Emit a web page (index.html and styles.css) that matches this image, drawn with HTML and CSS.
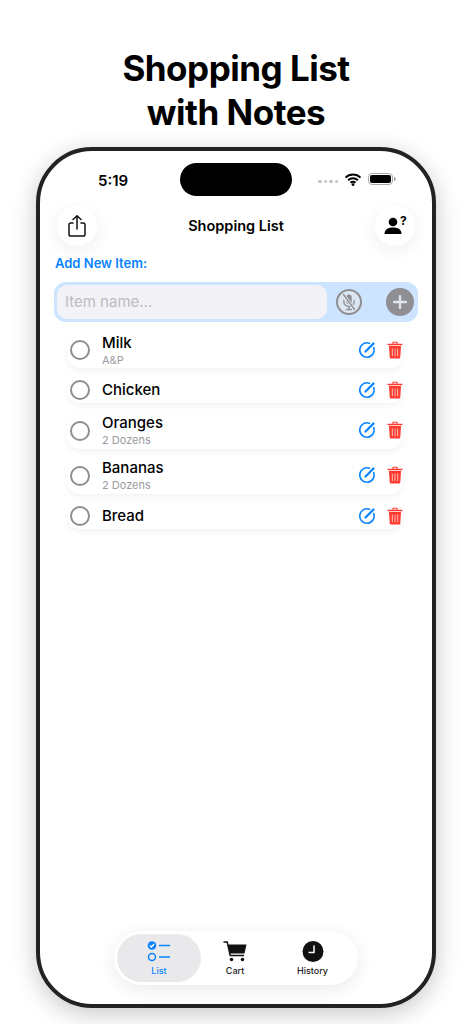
FILE: index.html
```html
<!DOCTYPE html>
<html lang="en">
<head>
  <meta charset="UTF-8">
  <meta name="viewport" content="width=device-width, initial-scale=1">
  <title>Shopping List with Notes</title>
  <link rel="stylesheet" href="styles.css">
</head>
<body>
  <h1 class="headline">Shopping List<br>with Notes</h1>

  <div class="phone">
    <div class="status-bar">
      <span class="time">5:19</span>
      <div class="island"></div>
      <div class="status-icons">
        <div class="signal"><i></i><i></i><i></i><i></i></div>
        <svg class="wifi" width="18" height="13" viewBox="0 0 17 13">
          <path d="M1 4.600a10.600 10.600 0 0 1 15 0M3.600 7.300a7 7 0 0 1 9.800 0M6 9.800a3.400 3.400 0 0 1 5 0" fill="none" stroke="#000" stroke-width="2"/>
          <circle cx="8.500" cy="11.600" r="1.400" fill="#000"/>
        </svg>
        <div class="battery"><div class="battery-fill"></div></div>
        <div class="battery-cap"></div>
      </div>
    </div>

    <div class="header">
      <div class="round-btn">
        <svg width="20" height="24" viewBox="0 0 20 24" fill="none" stroke="#111" stroke-width="1.500" stroke-linecap="round" stroke-linejoin="round">
          <path d="M6 9H3.800C2.800 9 2 9.800 2 10.800V20.200C2 21.200 2.800 22 3.800 22H16.200C17.200 22 18 21.200 18 20.200V10.800C18 9.800 17.200 9 16.200 9H14"/>
          <path d="M10 15V2M6 5.500L10 1.800L14 5.500"/>
        </svg>
      </div>
      <div class="title">Shopping List</div>
      <div class="round-btn">
        <svg class="person" width="20" height="18" viewBox="0 0 20 18">
          <circle cx="9" cy="5" r="4.300"/>
          <path d="M0.500 17C0.500 12.500 4 10.500 9 10.500S17.500 12.500 17.500 17Z"/>
        </svg>
        <span class="question">?</span>
      </div>
    </div>

    <div class="add-label">Add New Item:</div>
    <div class="add-bar">
      <div class="item-input">Item name...</div>
      <div class="mic-btn">
        <svg width="16" height="18" viewBox="0 0 16 18" fill="none" stroke="#8e8e93" stroke-linecap="round">
          <rect x="5.300" y="1.500" width="5.400" height="9.500" rx="2.700" fill="#8e8e93" stroke="none"/>
          <path d="M2.800 7.500V8.500C2.800 11.300 5 13.300 8 13.300S13.200 11.300 13.200 8.500V7.500M8 13.300V16M5.500 16.500H10.500" stroke-width="1.300"/>
          <path d="M2.500 1.500L13.500 16.500" stroke="#dbe6f2" stroke-width="3"/>
          <path d="M2.500 1.500L13.500 16.500" stroke-width="1.300"/>
        </svg>
      </div>
      <div class="plus-btn">
        <svg width="14" height="14" viewBox="0 0 14 14"><path d="M7 1V13M1 7H13" stroke="#dfe6ee" stroke-width="2.400" stroke-linecap="round"/></svg>
      </div>
    </div>

    <div class="list">
      <div class="row">
        <div class="radio"></div>
        <div class="row-text"><div class="item-name">Milk</div><div class="item-note">A&amp;P</div></div>
        <svg class="edit-icon" width="18" height="18" viewBox="0 0 18 18" fill="none" stroke="#0a84ff" stroke-linecap="round"><path d="M11.500 2.300A7.200 7.200 0 1 0 15.700 6.500" stroke-width="1.600"/><path d="M7.500 10.500L15.500 2.500" stroke-width="2.300"/></svg>
        <svg class="trash-icon" width="16" height="18" viewBox="0 0 15 17"><path d="M5 2.500V1.500C5 1 5.500 .6 6 .6H9C9.500 .6 10 1 10 1.500V2.500H14.500V4H.5V2.500ZM6 2.500H9V1.600H6Z" fill="#ff3b30"/><path d="M1.800 4.800H13.200L12.500 15.300C12.400 16.100 11.900 16.500 11.200 16.500H3.800C3.100 16.500 2.600 16.100 2.500 15.300Z" fill="#ff3b30"/><path d="M5 7V14.500M7.500 7V14.500M10 7V14.500" stroke="#ffb3ae" stroke-width="1"/></svg>
      </div>
      <div class="row">
        <div class="radio"></div>
        <div class="row-text"><div class="item-name">Chicken</div></div>
        <svg class="edit-icon" width="18" height="18" viewBox="0 0 18 18" fill="none" stroke="#0a84ff" stroke-linecap="round"><path d="M11.500 2.300A7.200 7.200 0 1 0 15.700 6.500" stroke-width="1.600"/><path d="M7.500 10.500L15.500 2.500" stroke-width="2.300"/></svg>
        <svg class="trash-icon" width="16" height="18" viewBox="0 0 15 17"><path d="M5 2.500V1.500C5 1 5.500 .6 6 .6H9C9.500 .6 10 1 10 1.500V2.500H14.500V4H.5V2.500ZM6 2.500H9V1.600H6Z" fill="#ff3b30"/><path d="M1.800 4.800H13.200L12.500 15.300C12.400 16.100 11.900 16.500 11.200 16.500H3.800C3.100 16.500 2.600 16.100 2.500 15.300Z" fill="#ff3b30"/><path d="M5 7V14.500M7.500 7V14.500M10 7V14.500" stroke="#ffb3ae" stroke-width="1"/></svg>
      </div>
      <div class="row">
        <div class="radio"></div>
        <div class="row-text"><div class="item-name">Oranges</div><div class="item-note">2 Dozens</div></div>
        <svg class="edit-icon" width="18" height="18" viewBox="0 0 18 18" fill="none" stroke="#0a84ff" stroke-linecap="round"><path d="M11.500 2.300A7.200 7.200 0 1 0 15.700 6.500" stroke-width="1.600"/><path d="M7.500 10.500L15.500 2.500" stroke-width="2.300"/></svg>
        <svg class="trash-icon" width="16" height="18" viewBox="0 0 15 17"><path d="M5 2.500V1.500C5 1 5.500 .6 6 .6H9C9.500 .6 10 1 10 1.500V2.500H14.500V4H.5V2.500ZM6 2.500H9V1.600H6Z" fill="#ff3b30"/><path d="M1.800 4.800H13.200L12.500 15.300C12.400 16.100 11.900 16.500 11.200 16.500H3.800C3.100 16.500 2.600 16.100 2.500 15.300Z" fill="#ff3b30"/><path d="M5 7V14.500M7.500 7V14.500M10 7V14.500" stroke="#ffb3ae" stroke-width="1"/></svg>
      </div>
      <div class="row">
        <div class="radio"></div>
        <div class="row-text"><div class="item-name">Bananas</div><div class="item-note">2 Dozens</div></div>
        <svg class="edit-icon" width="18" height="18" viewBox="0 0 18 18" fill="none" stroke="#0a84ff" stroke-linecap="round"><path d="M11.500 2.300A7.200 7.200 0 1 0 15.700 6.500" stroke-width="1.600"/><path d="M7.500 10.500L15.500 2.500" stroke-width="2.300"/></svg>
        <svg class="trash-icon" width="16" height="18" viewBox="0 0 15 17"><path d="M5 2.500V1.500C5 1 5.500 .6 6 .6H9C9.500 .6 10 1 10 1.500V2.500H14.500V4H.5V2.500ZM6 2.500H9V1.600H6Z" fill="#ff3b30"/><path d="M1.800 4.800H13.200L12.500 15.300C12.400 16.100 11.900 16.500 11.200 16.500H3.800C3.100 16.500 2.600 16.100 2.500 15.300Z" fill="#ff3b30"/><path d="M5 7V14.500M7.500 7V14.500M10 7V14.500" stroke="#ffb3ae" stroke-width="1"/></svg>
      </div>
      <div class="row">
        <div class="radio"></div>
        <div class="row-text"><div class="item-name">Bread</div></div>
        <svg class="edit-icon" width="18" height="18" viewBox="0 0 18 18" fill="none" stroke="#0a84ff" stroke-linecap="round"><path d="M11.500 2.300A7.200 7.200 0 1 0 15.700 6.500" stroke-width="1.600"/><path d="M7.500 10.500L15.500 2.500" stroke-width="2.300"/></svg>
        <svg class="trash-icon" width="16" height="18" viewBox="0 0 15 17"><path d="M5 2.500V1.500C5 1 5.500 .6 6 .6H9C9.500 .6 10 1 10 1.500V2.500H14.500V4H.5V2.500ZM6 2.500H9V1.600H6Z" fill="#ff3b30"/><path d="M1.800 4.800H13.200L12.500 15.300C12.400 16.100 11.900 16.500 11.200 16.500H3.800C3.100 16.500 2.600 16.100 2.500 15.300Z" fill="#ff3b30"/><path d="M5 7V14.500M7.500 7V14.500M10 7V14.500" stroke="#ffb3ae" stroke-width="1"/></svg>
      </div>
    </div>

    <div class="tab-bar">
      <div class="tab active">
        <svg width="24" height="21" viewBox="0 0 24 21">
          <circle cx="5" cy="4.500" r="4.300" fill="#0a84ff"/>
          <path d="M3 4.500L4.500 6L7 3" fill="none" stroke="#fff" stroke-width="1.200"/>
          <circle cx="5" cy="16" r="3.500" fill="none" stroke="#0a84ff" stroke-width="1.500"/>
          <path d="M12 4.500H23M12 16H23" stroke="#0a84ff" stroke-width="1.500"/>
        </svg>
        <span>List</span>
      </div>
      <div class="tab">
        <svg width="24" height="21" viewBox="0 0 24 21">
          <path d="M0.500 1H4.200L7.200 14.500H21" fill="none" stroke="#111" stroke-width="1.500"/>
          <path d="M5 3.500H23.500L21.500 12.500H7Z" fill="#111"/>
          <circle cx="8.500" cy="18.500" r="1.800" fill="#111"/>
          <circle cx="19.500" cy="18.500" r="1.800" fill="#111"/>
        </svg>
        <span>Cart</span>
      </div>
      <div class="tab">
        <svg width="24" height="21" viewBox="0 0 24 21">
          <circle cx="12" cy="10.500" r="10.500" fill="#111"/>
          <path d="M13 4.500V11.500H7.500" fill="none" stroke="#fff" stroke-width="1.500"/>
        </svg>
        <span>History</span>
      </div>
    </div>
  </div>
</body>
</html>
```

FILE: styles.css
```css
html, body {
  height: 100%;
  margin: 0;
  padding: 0;
}

body {
  background: #fff;
  color: #000;
  font-family: 'Inter', 'Liberation Sans', sans-serif;
  overflow: hidden;
  display: flex;
  flex-direction: column;
  align-items: center;
}

.headline {
  margin: 46px 0 13px;
  font-size: 35px;
  line-height: 44px;
  font-weight: 700;
  text-align: center;
  letter-spacing: -0.5px;
}

.phone {
  width: 400px;
  height: 861px;
  box-sizing: border-box;
  border: 4px solid #222;
  border-radius: 56px;
  background: #fff;
  box-shadow: 0 6px 24px rgba(0, 0, 0, 0.22);
  display: flex;
  flex-direction: column;
  padding: 12px 17px 19px;
  overflow: hidden;
}

/* Status bar */
.status-bar {
  height: 34px;
  display: flex;
  align-items: center;
  position: relative;
}

.time {
  margin-left: 41px;
  font-size: 15px;
  font-weight: 600;
}

.island {
  position: absolute;
  left: 123px;
  top: 0;
  width: 112px;
  height: 33px;
  border-radius: 17px;
  background: #000;
}

.status-icons {
  margin: -2px 19px 0 auto;
  display: flex;
  align-items: center;
}

.signal {
  display: flex;
  gap: 2px;
  margin-top: 5px;
  margin-right: 6px;
}

.signal i {
  width: 3.5px;
  height: 3.5px;
  border-radius: 50%;
  background: #c4c4c4;
}

.wifi {
  margin-right: 6px;
}

.battery {
  width: 25px;
  height: 12px;
  box-sizing: border-box;
  border: 1px solid #aaa;
  border-radius: 4px;
  padding: 1px;
}

.battery-fill {
  height: 100%;
  background: #000;
  border-radius: 2px;
}

.battery-cap {
  width: 2px;
  height: 4px;
  margin-left: 1px;
  background: #aaa;
  border-radius: 0 2px 2px 0;
}

/* Header */
.header {
  display: flex;
  align-items: center;
  justify-content: space-between;
  margin-top: 9px;
}

.round-btn {
  width: 40px;
  height: 40px;
  border-radius: 50%;
  background: #fff;
  box-shadow: 0 4px 18px rgba(0, 0, 0, 0.07);
  display: flex;
  align-items: center;
  justify-content: center;
  position: relative;
}

.person {
  margin-left: -1px;
}

.question {
  position: absolute;
  left: 25px;
  top: 7px;
  font-size: 12px;
  font-weight: 700;
}

.title {
  font-size: 14.5px;
  font-weight: 600;
  margin-top: -2px;
}

.add-label {
  margin: 8px 0 0 -2px;
  height: 20px;
  line-height: 18px;
  font-size: 13px;
  font-weight: 600;
  color: #0a84ff;
}

/* Add bar */
.add-bar {
  margin: 8px -3px 0 -3px;
  height: 40px;
  box-sizing: border-box;
  padding: 3px;
  background: #cce4ff;
  border-radius: 12px;
  display: flex;
  align-items: center;
}

.item-input {
  width: 270px;
  height: 34px;
  box-sizing: border-box;
  padding-left: 8px;
  background: #f2f2f7;
  border-radius: 10px;
  line-height: 34px;
  font-size: 15px;
  color: #bcbcc2;
}

.mic-btn {
  width: 26px;
  height: 26px;
  box-sizing: border-box;
  margin-left: 9px;
  border: 2.5px solid #8e8e93;
  border-radius: 50%;
  background: #dbe6f2;
  display: flex;
  align-items: center;
  justify-content: center;
}

.plus-btn {
  width: 28px;
  height: 28px;
  margin-left: 24px;
  border-radius: 50%;
  background: #8e8e93;
  display: flex;
  align-items: center;
  justify-content: center;
}

/* List */
.list {
  margin: 10px 12px 0 10px;
  display: flex;
  flex-direction: column;
  gap: 9.25px;
}

.row {
  min-height: 26px;
  background: #fff;
  border-radius: 13px;
  box-shadow: 0 3px 6px rgba(0, 0, 0, 0.05);
  display: flex;
  align-items: center;
  padding: 0 0 0 3px;
}

.row:has(.item-note) {
  min-height: 36px;
}

.radio {
  width: 20px;
  height: 20px;
  box-sizing: border-box;
  border: 2px solid #8e8e93;
  border-radius: 50%;
  flex-shrink: 0;
}

.row-text {
  flex: 1;
  margin-left: 12px;
}

.item-name {
  font-size: 15px;
  line-height: 20px;
  font-weight: 500;
}

.item-note {
  font-size: 11px;
  line-height: 15px;
  color: #9a9aa0;
}

.edit-icon {
  flex-shrink: 0;
  margin-top: -1px;
}

.trash-icon {
  flex-shrink: 0;
  margin-top: -1px;
  margin-left: 11px;
}

/* Tab bar */
.tab-bar {
  margin: auto 57px 0 57px;
  height: 54px;
  box-sizing: border-box;
  padding: 3px 1px 3px 3px;
  border-radius: 27px;
  background: #fff;
  box-shadow: 0 4px 18px rgba(0, 0, 0, 0.09);
  display: grid;
  grid-template-columns: 84px 68px 87px;
  flex-shrink: 0;
}

.tab {
  height: 48px;
  border-radius: 24px;
  display: flex;
  flex-direction: column;
  align-items: center;
  justify-content: center;
  gap: 3px;
  font-size: 9px;
  font-weight: 500;
  color: #222;
}

.tab.active {
  background: #e9e9eb;
  color: #0a84ff;
}
```
